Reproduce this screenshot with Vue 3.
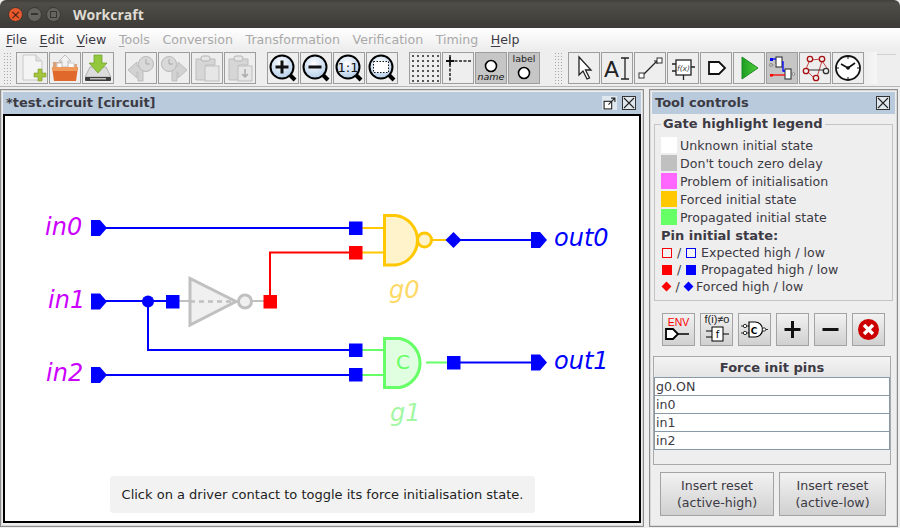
<script setup>
const legend = [
  { color: '#ffffff', text: 'Unknown initial state' },
  { color: '#c0c0c0', text: "Don't touch zero delay" },
  { color: '#ff66ff', text: 'Problem of initialisation' },
  { color: '#ffc800', text: 'Forced initial state' },
  { color: '#66ff66', text: 'Propagated initial state' }
]
const menus = [
  { label: 'File', key: 'F', rest: 'ile' },
  { label: 'Edit', key: 'E', rest: 'dit' },
  { label: 'View', key: 'V', rest: 'iew' },
  { label: 'Tools', key: 'T', rest: 'ools', off: true },
  { label: 'Conversion', rest: 'Conversion', off: true },
  { label: 'Transformation', rest: 'Transformation', off: true },
  { label: 'Verification', rest: 'Verification', off: true },
  { label: 'Timing', rest: 'Timing', off: true },
  { label: 'Help', key: 'H', rest: 'elp' }
]
const forcePins = ['g0.ON', 'in0', 'in1', 'in2']
const gridDots = []
for (let y = 3; y <= 28; y += 5) {
  for (let x = 3; x <= 28; x += 5) gridDots.push({ x, y })
}
</script>

<template>
  <div class="app">
    <header class="titlebar">
      <span class="wbtn close">×</span>
      <span class="wbtn"><i class="dash"></i></span>
      <span class="wbtn"><i class="box"></i></span>
      <span class="wtitle">Workcraft</span>
    </header>

    <nav class="menubar">
      <span v-for="m in menus" :key="m.label" class="menu" :class="{ off: m.off }"><u v-if="m.key">{{ m.key }}</u>{{ m.rest }}</span>
    </nav>

    <div class="toolbar">
      <div class="grip"></div>
      <div class="group">
        <button class="tb">
          <svg viewBox="0 0 30 30"><path d="M6 2H19L25 8V27H6Z" fill="#f4f4f4" stroke="#c8c8c8"/><path d="M19 2V8H25" fill="#e2e2e2" stroke="#c8c8c8"/><path d="M21 16h4v4h4v4h-4v4h-4v-4h-4v-4h4z" fill="#a4c43c" stroke="#7f9c2a" stroke-width=".6"/></svg>
        </button>
        <button class="tb">
          <svg viewBox="0 0 30 30"><path d="M3 9H11L13 11H27V15H3Z" fill="#d9a07c"/><rect x="7" y="10" width="17" height="8" fill="#fbfbfb" stroke="#ccc"/><path d="M15 2L21 8H18V14H12V8H9Z" fill="#f2f2f2" stroke="#a9a9a9" stroke-width=".7"/><path d="M2 14H28L26 28H4Z" fill="#e0682a"/><path d="M2 14H28L27.4 18H2.6Z" fill="#ef9a5a"/></svg>
        </button>
        <button class="tb">
          <svg viewBox="0 0 30 30"><path d="M7 14H23L28 24H2Z" fill="#dcdcdc" stroke="#9c9c9c" stroke-width=".7"/><rect x="2" y="24" width="26" height="4" rx="1" fill="#3c3c3c"/><rect x="7" y="25" width="16" height="1.5" fill="#bbb"/><path d="M11 2H19V10H24L15 20L6 10H11Z" fill="#93c83c" stroke="#6f9c25" stroke-width=".7"/></svg>
        </button>
      </div>
      <div class="group">
        <button class="tb">
          <svg viewBox="0 0 30 30"><path d="M2 17L11 9V13H17V28H12V19H11V25Z" fill="#d2d2d2" stroke="#bdbdbd"/><circle cx="20" cy="11" r="7.5" fill="#d8d8d8" stroke="#b9b9b9"/><path d="M20 6V11H24" fill="none" stroke="#a8a8a8"/></svg>
        </button>
        <button class="tb">
          <svg viewBox="0 0 30 30"><path d="M28 17L19 9V13H13V28H18V19H19V25Z" fill="#d2d2d2" stroke="#bdbdbd"/><circle cx="10" cy="11" r="7.5" fill="#d8d8d8" stroke="#b9b9b9"/><path d="M10 6V11H14" fill="none" stroke="#a8a8a8"/></svg>
        </button>
        <button class="tb">
          <svg viewBox="0 0 30 30"><path d="M4 6H23V12H14V27H4Z" fill="#d6d6d6" stroke="#bdbdbd"/><rect x="9" y="3" width="9" height="5" rx="2" fill="#e6e6e6" stroke="#b5b5b5"/><rect x="13" y="13" width="14" height="15" fill="#e6e6e6" stroke="#bdbdbd"/></svg>
        </button>
        <button class="tb">
          <svg viewBox="0 0 30 30"><path d="M4 6H23V12H14V27H4Z" fill="#d6d6d6" stroke="#bdbdbd"/><rect x="9" y="3" width="9" height="5" rx="2" fill="#e6e6e6" stroke="#b5b5b5"/><rect x="13" y="13" width="14" height="15" fill="#e6e6e6" stroke="#bdbdbd"/><path d="M20 16V23M17 21L20 24L23 21" fill="none" stroke="#aaa" stroke-width="1.5"/></svg>
        </button>
      </div>
      <div class="group">
        <button class="tb">
          <svg viewBox="0 0 30 30"><defs><radialGradient id="lens" cx=".45" cy=".35" r=".75"><stop offset="0" stop-color="#fff"/><stop offset="1" stop-color="#a9c6e6"/></radialGradient></defs><path d="M21 21L27 27" stroke="#000" stroke-width="4"/><circle cx="14" cy="14" r="11.5" fill="url(#lens)" stroke="#000" stroke-width="2"/><path d="M14 7.5V20.5M7.5 14H20.5" stroke="#111" stroke-width="3"/></svg>
        </button>
        <button class="tb">
          <svg viewBox="0 0 30 30"><path d="M21 21L27 27" stroke="#000" stroke-width="4"/><circle cx="14" cy="14" r="11.5" fill="url(#lens)" stroke="#000" stroke-width="2"/><path d="M7.5 14H20.5" stroke="#111" stroke-width="3"/></svg>
        </button>
        <button class="tb">
          <svg viewBox="0 0 30 30"><path d="M21 21L27 27" stroke="#000" stroke-width="4"/><circle cx="14" cy="14" r="11.5" fill="url(#lens)" stroke="#000" stroke-width="2"/><text x="14" y="19" class="t11">1:1</text></svg>
        </button>
        <button class="tb">
          <svg viewBox="0 0 30 30"><path d="M21 21L27 27" stroke="#000" stroke-width="4"/><circle cx="14" cy="14" r="11.5" fill="url(#lens)" stroke="#000" stroke-width="2"/><rect x="6.5" y="8.5" width="15" height="11" fill="#fff" stroke="#111" stroke-dasharray="1.5 1.5"/></svg>
        </button>
      </div>
      <div class="group">
        <button class="tb">
          <svg viewBox="0 0 30 30"><circle v-for="d in gridDots" :key="d.x + '-' + d.y" :cx="d.x" :cy="d.y" r="1" fill="#222"/></svg>
        </button>
        <button class="tb">
          <svg viewBox="0 0 30 30"><path d="M7 8H29M7 2V29" stroke="#222" stroke-width="1.5" stroke-dasharray="3 1.5" fill="none"/><path d="M3 8H11M7 4V12" stroke="#111" stroke-width="1.8"/></svg>
        </button>
        <button class="tb on">
          <svg viewBox="0 0 30 30"><circle cx="15" cy="13" r="5.5" fill="#fff" stroke="#000" stroke-width="1.6"/><text x="15" y="27" class="t-name">name</text></svg>
        </button>
        <button class="tb on">
          <svg viewBox="0 0 30 30"><text x="15" y="9" class="t-label">label</text><circle cx="15" cy="20" r="5.5" fill="#fff" stroke="#000" stroke-width="1.6"/></svg>
        </button>
      </div>
      <div class="grip second"></div>
      <div class="group modes">
        <button class="tb">
          <svg viewBox="0 0 30 30"><path d="M10 4V22L14 18L18 26L20.5 25L16.5 17H22Z" fill="#fff" stroke="#222" stroke-width="1.3"/></svg>
        </button>
        <button class="tb">
          <svg viewBox="0 0 30 30"><text x="9.5" y="24" class="t-a">A</text><path d="M23 5V26M19 5H27M19 26H27" stroke="#222" stroke-width="1.3" fill="none"/></svg>
        </button>
        <button class="tb">
          <svg viewBox="0 0 30 30"><path d="M9 21L22 8" stroke="#222" stroke-width="1.3"/><path d="M19 8L22 8L22 11" fill="none" stroke="#222"/><rect x="4" y="20" width="5" height="5" fill="#fff" stroke="#333"/><rect x="22" y="5" width="5" height="5" fill="#fff" stroke="#333"/></svg>
        </button>
        <button class="tb">
          <svg viewBox="0 0 30 30"><rect x="8" y="7" width="15" height="15" fill="#fff" stroke="#222" stroke-width="1.3"/><text x="15.5" y="17.5" class="t-fx">f(x)</text><path d="M4 11H8M4 18H8M23 14H27M15.5 22V27" stroke="#222" stroke-width="1.3"/></svg>
        </button>
        <button class="tb">
          <svg viewBox="0 0 30 30"><path d="M8 9H18L24 15L18 21H8Z" fill="#fff" stroke="#111" stroke-width="1.8"/></svg>
        </button>
        <button class="tb">
          <svg viewBox="0 0 30 30"><defs><linearGradient id="play" x1="0" y1="0" x2="1" y2="0"><stop offset="0" stop-color="#1c9c22"/><stop offset="1" stop-color="#52d03c"/></linearGradient></defs><path d="M8 4L24 15L8 26Z" fill="url(#play)" stroke="#1c8a22"/></svg>
        </button>
        <button class="tb on">
          <svg viewBox="0 0 30 30"><rect x="9" y="4" width="6" height="10" fill="#fff" stroke="#222"/><rect x="18" y="16" width="6" height="10" fill="#fff" stroke="#222"/><path d="M4 6H9" stroke="#00f" stroke-width="1.3"/><rect x="3" y="5" width="3" height="3" fill="#00f"/><path d="M15 9H16V18H18" stroke="#00f" fill="none" stroke-width="1.3"/><path d="M4 12H9" stroke="#aaa"/><circle cx="4" cy="12" r="1.6" fill="#bbb" stroke="#666" stroke-width=".5"/><path d="M4 22H18" stroke="#f00" stroke-width="1.3"/><rect x="3" y="21" width="3" height="2.5" fill="#f00"/><circle cx="26.5" cy="21" r="1.4" fill="#ddd" stroke="#555" stroke-width=".5"/></svg>
        </button>
        <button class="tb">
          <svg viewBox="0 0 30 30"><path d="M10 7L22 6M9 9L6 16M22 8L27 15M8 19L14 25M22 8L17 24" stroke="#c04a4a" fill="none"/><path d="M8 17H24" stroke="#333"/><circle cx="10" cy="6" r="2.7" fill="#eee" stroke="#a80f0f" stroke-width="1.3"/><circle cx="22" cy="6" r="2.7" fill="#eee" stroke="#a80f0f" stroke-width="1.3"/><circle cx="6" cy="18" r="2.7" fill="#eee" stroke="#a80f0f" stroke-width="1.3"/><circle cx="16" cy="25" r="2.7" fill="#eee" stroke="#a80f0f" stroke-width="1.3"/><circle cx="26" cy="18" r="2.7" fill="#eee" stroke="#333" stroke-width="1.3"/></svg>
        </button>
        <button class="tb">
          <svg viewBox="0 0 30 30"><circle cx="15" cy="15" r="12" fill="#fff" stroke="#111" stroke-width="1.8"/><path d="M15 15L8 11M15 15L22 10" stroke="#111" stroke-width="1.6"/><circle cx="15" cy="15" r="1.8" fill="#111"/><path d="M15 3.5V6M15 24V26.5M3.5 15H6M24 15H26.5" stroke="#111"/></svg>
        </button>
      </div>
      <div class="tb-end"></div>
      <div class="tb-rest"></div>
    </div>

    <main class="workspace">
      <section class="panel editor">
        <div class="panel-head">
          <span class="panel-title">*test.circuit [circuit]</span>
          <span class="head-btn plain">
            <svg viewBox="0 0 12 12"><rect x="1" y="4" width="7" height="7" fill="#fff" stroke="#222"/><path d="M5 7L11 1M7.5 1H11V4.5" fill="none" stroke="#222"/></svg>
          </span>
          <span class="head-btn boxed">
            <svg viewBox="0 0 12 12"><path d="M1 1L11 11M11 1L1 11" stroke="#222" stroke-width="1.1"/></svg>
          </span>
        </div>
        <div class="canvas">
          <svg class="circuit" viewBox="5 116 634 405">
            <!-- wires -->
            <g fill="none" stroke-width="2">
              <path d="M100 228H350M100 301H170M148 301V350H350M100 375H350M453 240H535M454 362.5H535" stroke="#0000ff"/>
              <path d="M270 301V252.5H350" stroke="#ff0000"/>
              <path d="M179 301H190M252 301H264" stroke="#c0c0c0"/>
              <path d="M362 228H385M362 252.5H385M431 240H448" stroke="#ffc800"/>
              <path d="M362 350H385M362 375H385M426 362.5H448" stroke="#66ff66"/>
            </g>

            <!-- input and output ports -->
            <g fill="#0000ff">
              <path d="M91 220H100L107 228L100 236H91Z"/>
              <path d="M91 293.5H100L107 301.5L100 309.5H91Z"/>
              <path d="M91 367H100L107 375L100 383H91Z"/>
              <path d="M531 232H540L547 240L540 248H531Z"/>
              <path d="M531 354.5H540L547 362.5L540 370.5H531Z"/>
            </g>

            <!-- g0 -->
            <path d="M384.5 215.5H396A25 25 0 0 1 396 265H384.5Z" fill="#fff3cc" stroke="#ffc800" stroke-width="3"/>
            <circle cx="424.5" cy="240" r="7" fill="#fff3cc" stroke="#ffc800" stroke-width="3"/>
            <path d="M445.5 240L453.5 232L461.5 240L453.5 248Z" fill="#0000ff"/>

            <!-- g1 -->
            <path d="M384.5 338.5H400A25 25 0 0 1 400 387.5H384.5Z" fill="#e0ffe0" stroke="#66ff66" stroke-width="3"/>
            <text x="403" y="369" class="c-mark">C</text>

            <!-- buffer -->
            <path d="M190 278.5V325L236 301.5Z" fill="#f0f0f0" stroke="#c0c0c0" stroke-width="3" stroke-linejoin="miter"/>
            <path d="M190 301.5H237" stroke="#c0c0c0" stroke-width="2.4" stroke-dasharray="5 4"/>
            <circle cx="245" cy="301.5" r="6.5" fill="#f0f0f0" stroke="#c0c0c0" stroke-width="3"/>

            <!-- pins -->
            <g fill="#0000ff">
              <rect x="349" y="221.5" width="13.5" height="13.5"/>
              <rect x="349" y="343.5" width="13.5" height="13.5"/>
              <rect x="349" y="368" width="13.5" height="13.5"/>
              <rect x="166" y="295" width="13.5" height="13.5"/>
              <rect x="447" y="356" width="13.5" height="13.5"/>
              <circle cx="148" cy="301.5" r="6"/>
            </g>
            <g fill="#ff0000">
              <rect x="349" y="246" width="13.5" height="13.5"/>
              <rect x="263.5" y="295" width="13.5" height="13.5"/>
            </g>

            <!-- names -->
            <text x="45" y="235" class="name input">in0</text>
            <text x="48" y="308" class="name input">in1</text>
            <text x="46" y="381" class="name input">in2</text>
            <text x="554" y="246" class="name output">out0</text>
            <text x="554" y="369" class="name output">out1</text>
            <text x="389" y="298" class="name gate-y">g0</text>
            <text x="390" y="421" class="name gate-g">g1</text>
          </svg>
          <div class="hint">Click on a driver contact to toggle its force initialisation state.</div>
        </div>
      </section>

      <aside class="panel side">
        <div class="panel-head">
          <span class="panel-title">Tool controls</span>
          <span class="head-btn boxed">
            <svg viewBox="0 0 12 12"><path d="M1 1L11 11M11 1L1 11" stroke="#222" stroke-width="1.1"/></svg>
          </span>
        </div>
        <div class="side-body">
          <fieldset class="legend">
            <legend>Gate highlight legend</legend>
            <div v-for="row in legend" :key="row.text" class="legend-row">
              <i class="swatch" :style="{ background: row.color }"></i>{{ row.text }}
            </div>
            <div class="pin-head">Pin initial state:</div>
            <div class="pin-row">
              <i class="sq hollow red"></i><span class="sl">/</span><i class="sq hollow blue"></i><span class="pin-text">Expected high / low</span>
            </div>
            <div class="pin-row">
              <i class="sq red"></i><span class="sl">/</span><i class="sq blue"></i><span class="pin-text">Propagated high / low</span>
            </div>
            <div class="pin-row tight">
              <i class="dia red"></i><span class="sl">/</span><i class="dia blue"></i><span class="pin-text">Forced high / low</span>
            </div>
          </fieldset>

          <div class="actions">
            <button class="act">
              <svg viewBox="0 0 31 31"><text x="15.5" y="12" class="t-env">ENV</text><path d="M3 15H10L15 20L10 25H3Z" fill="#fff" stroke="#000" stroke-width="1.8"/><path d="M15 20H26" stroke="#000" stroke-width="1.5"/></svg>
            </button>
            <button class="act">
              <svg viewBox="0 0 31 31"><text x="16" y="9" class="t-fi">f(i)≠o</text><rect x="11" y="13" width="11" height="14" fill="#fff" stroke="#000"/><text x="16.5" y="24" class="t-f">f</text><path d="M5 17H11M5 23H11M22 20H28" stroke="#000"/></svg>
            </button>
            <button class="act">
              <svg viewBox="0 0 31 31"><path d="M10 8H16A7.5 7.5 0 0 1 16 23H10Z" fill="#fff" stroke="#000" stroke-width="1.2"/><text x="15" y="19.5" class="t-c">C</text><circle cx="6" cy="12" r="1.7" fill="#fff" stroke="#000" stroke-width=".8"/><circle cx="6" cy="19" r="1.7" fill="#fff" stroke="#000" stroke-width=".8"/><circle cx="25" cy="15.5" r="1.7" fill="#fff" stroke="#000" stroke-width=".8"/><path d="M2 12H4M2 19H4M8 12H10M8 19H10M27 15.5H29" stroke="#000" stroke-width=".8"/></svg>
            </button>
            <button class="act">
              <svg viewBox="0 0 31 31"><path d="M15.5 7V24M7.5 15.5H23.5" stroke="#111" stroke-width="3"/></svg>
            </button>
            <button class="act">
              <svg viewBox="0 0 31 31"><path d="M7.5 15.5H23.5" stroke="#111" stroke-width="3"/></svg>
            </button>
            <button class="act">
              <svg viewBox="0 0 31 31"><circle cx="15.5" cy="15.5" r="10.5" fill="#cc0000"/><path d="M11 11L20 20M20 11L11 20" stroke="#fff" stroke-width="3.4"/></svg>
            </button>
          </div>

          <div class="pins-box">
            <table class="pins">
              <thead>
                <tr><th>Force init pins</th></tr>
              </thead>
              <tbody>
                <tr v-for="pin in forcePins" :key="pin"><td>{{ pin }}</td></tr>
              </tbody>
            </table>
          </div>

          <div class="resets">
            <button class="reset first">Insert reset<br />(active-high)</button>
            <button class="reset">Insert reset<br />(active-low)</button>
          </div>
        </div>
      </aside>
    </main>
  </div>
</template>

<style scoped>
.app {
  width: 900px;
  height: 528px;
  display: flex;
  flex-direction: column;
  overflow: hidden;
  background: #eeeeee;
  color: #3c3a44;
  font-family: "DejaVu Sans", sans-serif;
  font-size: 12.6px;
}

.titlebar {
  height: 28px;
  flex: none;
  display: flex;
  align-items: center;
  padding-left: 8px;
  box-sizing: border-box;
  background: linear-gradient(#403f3a, #4f4d47 12%, #3c3b37);
  border-radius: 6px 6px 0 0;
}
.wbtn {
  width: 13px;
  height: 13px;
  margin-right: 4px;
  border-radius: 50%;
  background: #66645e;
  border: 1px solid #38372f;
  box-sizing: content-box;
  display: flex;
  align-items: center;
  justify-content: center;
  color: #4a2010;
  font-size: 13px;
  line-height: 1;
}
.wbtn.close {
  background: #e8592d;
}
.wbtn .dash {
  width: 7px;
  height: 2px;
  background: #38372f;
}
.wbtn .box {
  width: 5px;
  height: 5px;
  border: 1px solid #38372f;
}
.wtitle {
  margin-left: 8px;
  color: #dfdbd2;
  font-family: "Open Sans", sans-serif;
  font-weight: 700;
  font-size: 14px;
}

.menubar {
  height: 22px;
  flex: none;
  display: flex;
  align-items: center;
  padding-left: 6px;
  gap: 12.5px;
  box-sizing: border-box;
  background: linear-gradient(#ffffff, #ededed);
  font-size: 12.6px;
}
.menu.off {
  color: #a9a9a9;
}
.menu u {
  text-underline-offset: 2px;
}

.toolbar {
  height: 37px;
  flex: none;
  display: flex;
  box-sizing: border-box;
  padding: 2px 0 0 3px;
  border-bottom: 1px solid #b5b5b5;
  background: #eeeeee;
}
.grip {
  width: 9px;
  height: 32px;
  flex: none;
  margin-right: 4px;
  background-image: radial-gradient(#a8a8a8 0.7px, transparent 0.8px);
  background-size: 3px 3px;
}
.grip.second {
  margin-left: 3px;
  margin-right: 5px;
}
.group {
  display: flex;
  gap: 1px;
  margin-right: 11px;
}
.group.modes {
  margin-right: 0;
}
.tb-end {
  width: 13px;
  height: 32px;
  flex: none;
  background: linear-gradient(90deg, #eeeeee, #f6f6f6);
}
.tb-rest {
  flex: 1;
  height: 0;
  margin: 2px 4px 0 0;
  border-top: 1px solid #d0d0d0;
}
.tb {
  width: 32px;
  height: 32px;
  padding: 0;
  flex: none;
  display: block;
  border: 1px solid #9d9d9d;
  background: #eeeeee;
  box-sizing: border-box;
}
.tb.on {
  background: #c6c6c6;
}
.tb svg {
  display: block;
  width: 30px;
  height: 30px;
}

.t11 {
  font: 13px "DejaVu Sans", sans-serif;
  text-anchor: middle;
  fill: #111;
}
.t-name {
  font: italic 9.5px "DejaVu Sans", sans-serif;
  text-anchor: middle;
  fill: #111;
}
.t-label {
  font: 9.5px "DejaVu Sans", sans-serif;
  text-anchor: middle;
  fill: #222;
}
.t-a {
  font: 22px "DejaVu Sans", sans-serif;
  text-anchor: middle;
  fill: #222;
}
.t-fx {
  font: italic 7.5px "DejaVu Sans", sans-serif;
  text-anchor: middle;
  fill: #444;
}
.t-env {
  font: 10.5px "Liberation Sans", sans-serif;
  text-anchor: middle;
  fill: #ff0000;
}
.t-fi {
  font: 11px "Liberation Sans", sans-serif;
  text-anchor: middle;
  fill: #222;
}
.t-f {
  font: 10px "DejaVu Sans", sans-serif;
  text-anchor: middle;
  fill: #000;
}
.t-c {
  font: 700 9px "DejaVu Sans", sans-serif;
  text-anchor: middle;
  fill: #000;
}

.workspace {
  flex: 1;
  min-height: 0;
  display: flex;
  gap: 5px;
  padding: 2px 2px 1px 0;
}
.panel {
  display: flex;
  flex-direction: column;
  box-sizing: border-box;
  border: 1px solid #8e8e8e;
  box-shadow: inset 0 0 0 1px #d8d8d8;
  padding: 2px 2px 3px;
}
.editor {
  width: 644px;
  flex: none;
}
.side {
  flex: 1;
  min-width: 0;
}
.panel-head {
  height: 22px;
  flex: none;
  display: flex;
  align-items: center;
  gap: 5px;
  padding: 0 5px 0 3px;
  background: #b8cadb;
}
.panel-title {
  flex: 1;
  margin-top: -2px;
  font-weight: 700;
  font-size: 13px;
}
.head-btn {
  width: 14px;
  height: 14px;
  flex: none;
  display: block;
  box-sizing: border-box;
}
.head-btn svg {
  display: block;
  width: 13px;
  height: 13px;
  margin: 1px;
}
.head-btn.plain {
  width: 15px;
  background: #dfe7ef;
}
.head-btn.boxed {
  border: 1px solid #333;
  background: #dfe7ef;
}
.head-btn.boxed svg {
  width: 12px;
  height: 12px;
  margin: 0;
}

.canvas {
  flex: 1;
  min-height: 0;
  position: relative;
  border: 2px solid #000;
  background: #ffffff;
}
.circuit {
  display: block;
  width: 634px;
  height: 405px;
}
.name {
  font: italic 24px "DejaVu Sans", sans-serif;
}
.name.input {
  fill: #cc00ff;
}
.name.output {
  fill: #0000ff;
}
.name.gate-y {
  fill: #ffd966;
}
.name.gate-g {
  fill: #a3f7a3;
}
.c-mark {
  font: 20px "DejaVu Sans", sans-serif;
  text-anchor: middle;
  fill: #66ff66;
}
.hint {
  position: absolute;
  left: 105px;
  top: 360px;
  width: 425px;
  height: 37px;
  box-sizing: border-box;
  border-radius: 3px;
  background: #f2f2f2;
  color: #222222;
  font-size: 13px;
  line-height: 37px;
  text-align: center;
  white-space: nowrap;
}

.side-body {
  flex: 1;
  min-height: 0;
  display: flex;
  flex-direction: column;
  padding-top: 2px;
}
.legend {
  margin: 0 2px 0 2px;
  height: 185px;
  padding: 4px 5px 0 6px;
  box-sizing: border-box;
  border: 1px solid #c4c4c4;
  flex: none;
}
.legend legend {
  padding: 0 3px 0 2px;
  margin-left: 0;
  font-weight: 700;
  font-size: 13px;
  line-height: 16px;
}
.legend-row {
  height: 18px;
  display: flex;
  align-items: center;
  white-space: nowrap;
}
.swatch {
  width: 16px;
  height: 16px;
  margin-right: 3px;
  flex: none;
}
.pin-head {
  height: 18px;
  line-height: 20px;
  font-weight: 700;
  font-size: 13px;
}
.pin-row {
  height: 17px;
  display: flex;
  align-items: center;
  padding-left: 1px;
  white-space: nowrap;
}
.sq {
  width: 10px;
  height: 10px;
  flex: none;
  box-sizing: border-box;
}
.sq.red {
  background: #ff0000;
}
.sq.blue {
  background: #0000ff;
}
.sq.hollow {
  background: #f4f4f4;
  border: 1px solid;
}
.sq.hollow.red {
  border-color: #ff0000;
}
.sq.hollow.blue {
  border-color: #0000ff;
}
.dia {
  width: 7px;
  height: 7px;
  margin: 0 1px;
  flex: none;
  transform: rotate(45deg);
}
.dia.red {
  background: #ff0000;
}
.dia.blue {
  background: #0000ff;
}
.sl {
  width: 14px;
  text-align: center;
}
.pin-text {
  margin-left: 5px;
}
.pin-row.tight .sl {
  width: 13px;
}
.pin-row.tight .pin-text {
  margin-left: 3px;
}

.actions {
  display: flex;
  gap: 5px;
  margin: 12px 0 0 10px;
  flex: none;
}
.act {
  width: 33px;
  height: 33px;
  padding: 0;
  border: 1px solid #a3a3a3;
  background: linear-gradient(#f2f2f2, #d0d0d0);
  box-sizing: border-box;
  flex: none;
}
.act svg {
  display: block;
  width: 31px;
  height: 31px;
}

.pins-box {
  margin: 10px 0 0 1px;
  width: 238px;
  height: 109px;
  flex: none;
  box-sizing: border-box;
  border: 1px solid #a9a9a9;
  background: #eeeeee;
}
.pins {
  width: 100%;
  border-collapse: collapse;
  table-layout: fixed;
  font-size: 12.6px;
}
.pins th {
  height: 20px;
  padding: 0;
  font-weight: 700;
  font-size: 13px;
  background: linear-gradient(#f4f4f4, #e4e4e4);
  border-bottom: 1px solid #8a99a8;
}
.pins td {
  height: 17px;
  padding: 0 0 0 1px;
  line-height: 17px;
  background: #ffffff;
  border: 1px solid #8a99a8;
  border-top: none;
}

.resets {
  display: flex;
  margin: 7px 0 0 8px;
  gap: 5px;
  flex: none;
}
.reset {
  height: 44px;
  width: 107px;
  padding: 0;
  border: 1px solid #a3a3a3;
  background: linear-gradient(#f2f2f2, #d0d0d0);
  color: #3c3a44;
  font-family: "DejaVu Sans", sans-serif;
  font-size: 12.6px;
  line-height: 17px;
}
.reset.first {
  width: 114px;
}
</style>

<style>
html, body {
  margin: 0;
  background: #eeeeee;
}
</style>
